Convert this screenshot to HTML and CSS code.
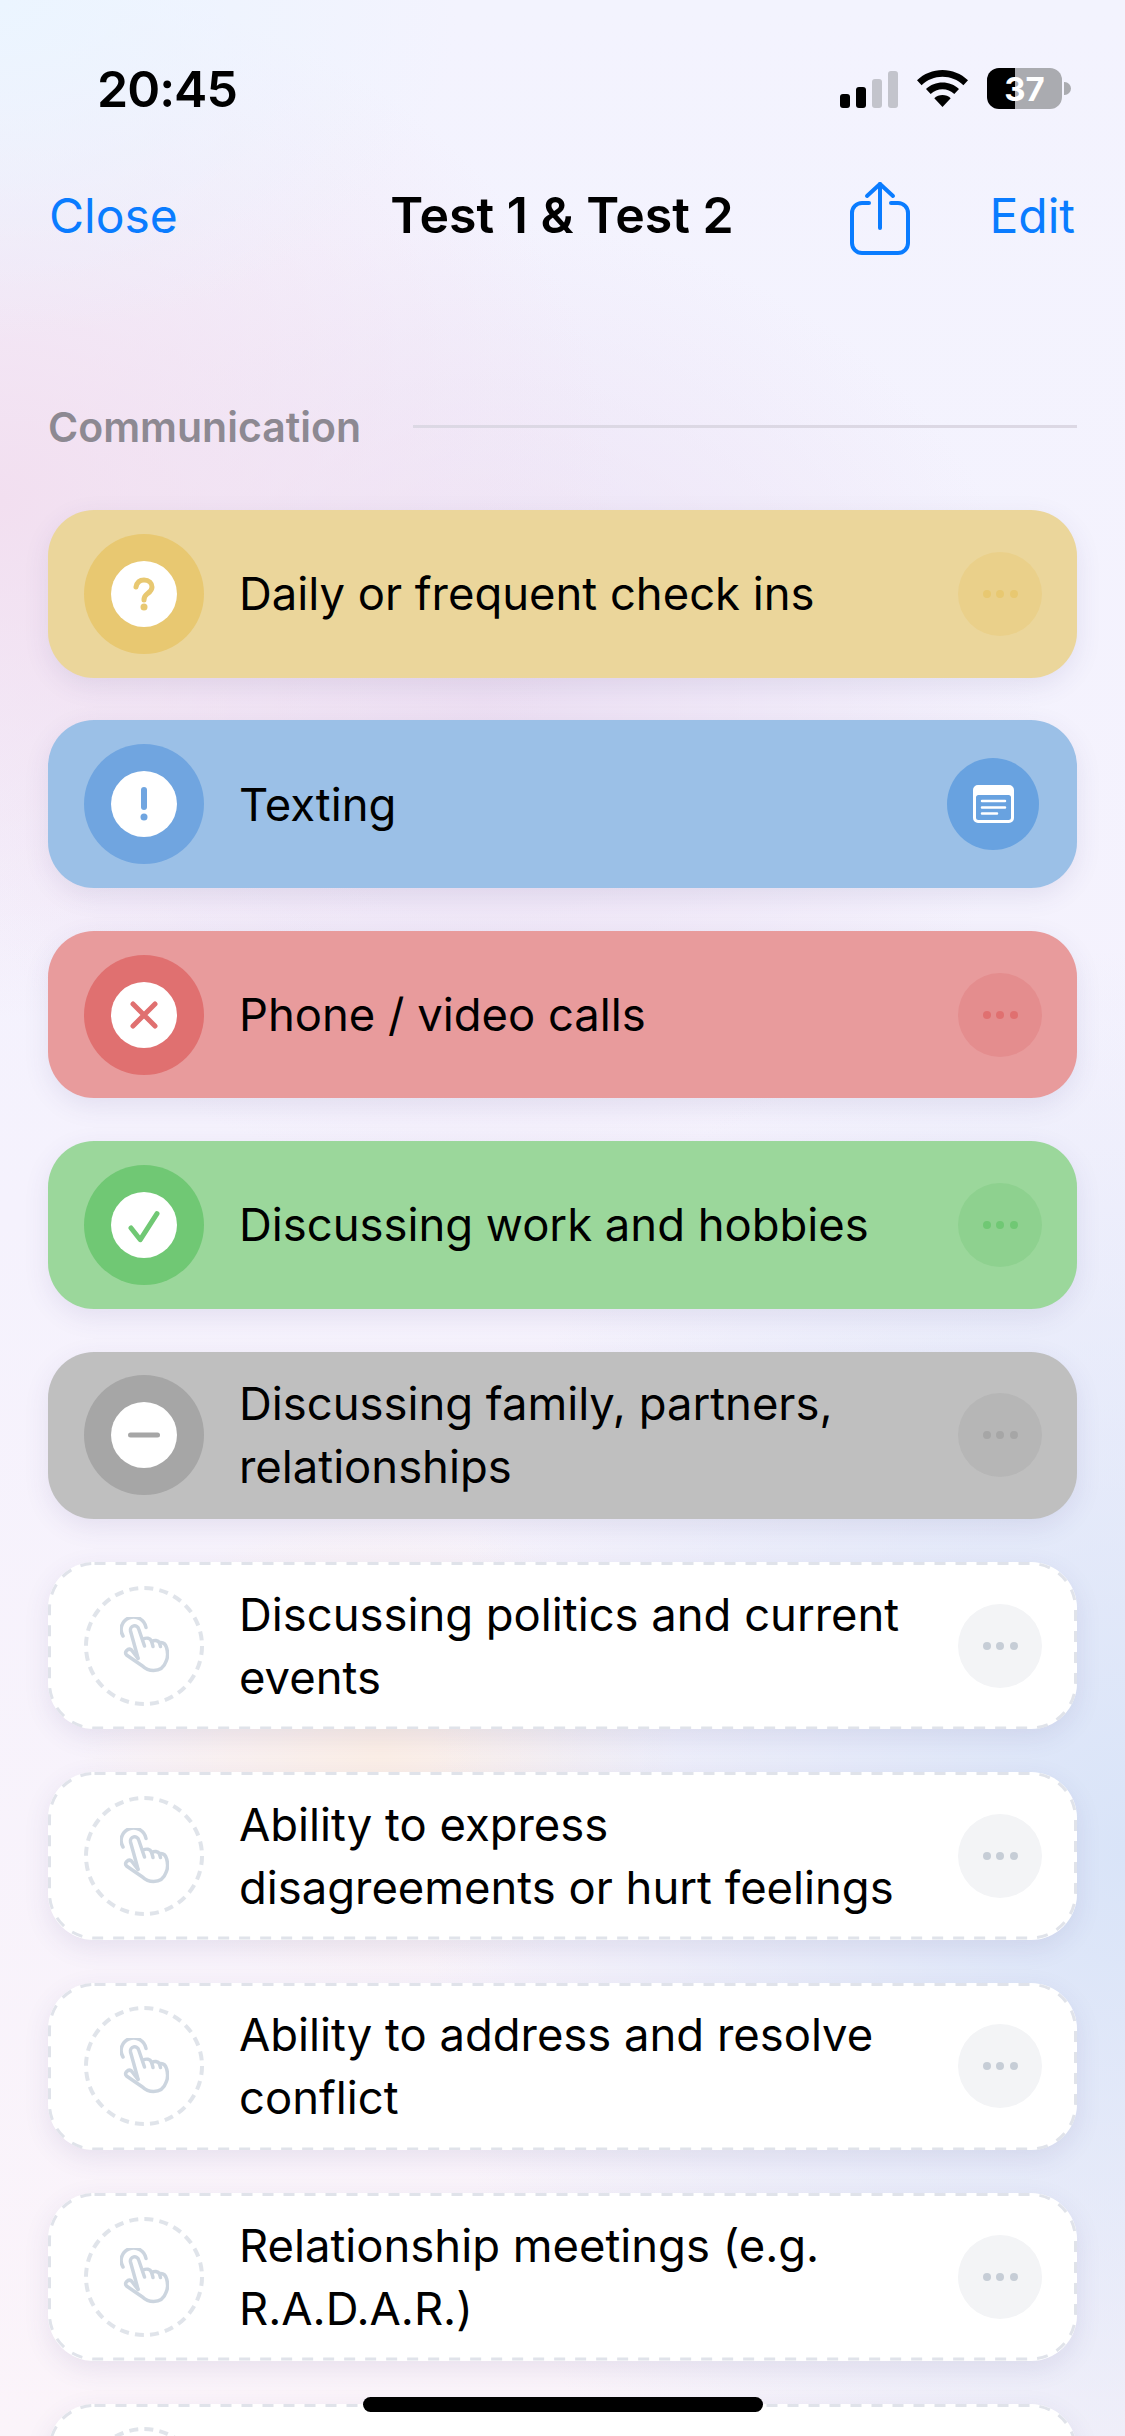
FILE: index.html
```html
<!DOCTYPE html>
<html lang="en">
<head>
    <meta charset="UTF-8">
    <meta name="viewport" content="width=device-width, initial-scale=1.0">
    <title>Test 1 &amp; Test 2</title>
    <link rel="stylesheet" href="styles.css">
</head>
<body>
    <svg class="defs" width="0" height="0">
        <symbol id="hand" viewBox="0 0 49 57">
            <g fill="none" stroke="currentColor" stroke-width="3.500" stroke-linecap="round" stroke-linejoin="round">
                <path d="M3 19A12.500 12.500 0 1 1 26 10.500"/>
                <path d="M18 41 10.500 14a4.200 4.200 0 0 1 8.200-2L24.500 29"/>
                <path d="M23 22c3.500-1.500 7-1 8.500 2l1.500 5.500"/>
                <path d="M31.500 24.500c3-1.500 6.500-1.500 8 1.500l1 3.500"/>
                <path d="M39.500 25.500c3.500-.5 6 1.500 7 5 1.500 5 1.500 10-.5 14-2 6-7 9-12.500 9-4.500 0-8-1.500-11-4.500L6.500 38c-2.500-3 1.500-7.500 5-5l6.500 8.500"/>
            </g>
        </symbol>
    </svg>

    <div class="screen">
        <div class="status-bar">
            <span class="time">20:45</span>
            <div class="status-icons">
                <div class="signal">
                    <i class="bar bar-1"></i><i class="bar bar-2"></i><i class="bar bar-3"></i><i class="bar bar-4"></i>
                </div>
                <svg class="wifi" viewBox="0 0 51 37">
                    <path d="M25.500 0C16 0 7 3.700 0 10.200l4.600 5C10.400 9.800 17.700 6.800 25.500 6.800s15.100 3 20.900 8.400l4.600-5C44 3.700 35 0 25.500 0Z"/>
                    <path d="M25.500 12.500c-6.200 0-12 2.300-16.500 6.500l4.700 5c3.200-3 7.400-4.700 11.800-4.700s8.600 1.700 11.800 4.700l4.700-5c-4.500-4.200-10.300-6.500-16.500-6.500Z"/>
                    <path d="M25.500 25c-3.100 0-6 1.100-8.200 3.200l8.200 8.800 8.200-8.800c-2.200-2.100-5.100-3.200-8.200-3.200Z"/>
                </svg>
                <div class="battery"><span class="battery-level">37</span></div>
                <i class="battery-nub"></i>
            </div>
        </div>

        <div class="nav">
            <a class="nav-link">Close</a>
            <div class="nav-title">Test 1 &amp; Test 2</div>
            <div class="nav-right">
                <svg class="share" viewBox="0 0 60 74">
                    <g fill="none" stroke="#0a7cff" stroke-width="4" stroke-linecap="round" stroke-linejoin="round">
                        <path d="M19 22h-7a10 10 0 0 0-10 10v30a10 10 0 0 0 10 10h36a10 10 0 0 0 10-10V32a10 10 0 0 0-10-10h-7"/>
                        <path d="M30 47V3"/>
                        <path d="M17 15 30 3l13 12"/>
                    </g>
                </svg>
                <a class="nav-link">Edit</a>
            </div>
        </div>

        <div class="section-head">
            <span class="section-name">Communication</span>
            <i class="section-line"></i>
        </div>

        <div class="cards">
            <div class="card card-yellow">
                <div class="status"><div class="status-inner">
                    <svg viewBox="0 0 36 36"><path d="M10 11c1-5 4-7 8-7 5 0 8 3 8 7 0 4-3 5.500-5 7-2 1.500-3 3-3 6" fill="none" stroke="currentColor" stroke-width="5" stroke-linecap="round"/><circle cx="18" cy="31" r="3.500" fill="currentColor"/></svg>
                </div></div>
                <div class="card-text">Daily or frequent check ins</div>
                <div class="more"><i></i><i></i><i></i></div>
            </div>

            <div class="card card-blue">
                <div class="status"><div class="status-inner">
                    <svg viewBox="0 0 36 36"><path d="M18 4v17" fill="none" stroke="currentColor" stroke-width="6" stroke-linecap="round"/><circle cx="18" cy="31" r="3.500" fill="currentColor"/></svg>
                </div></div>
                <div class="card-text">Texting</div>
                <div class="note">
                    <svg viewBox="0 0 41 38">
                        <path fill="#fff" fill-rule="evenodd" d="M5 0h31a5 5 0 0 1 5 5v28a5 5 0 0 1-5 5H5a5 5 0 0 1-5-5V5a5 5 0 0 1 5-5Zm.500 10A2.500 2.500 0 0 0 3 12.500v20A2.500 2.500 0 0 0 5.500 35h30a2.500 2.500 0 0 0 2.500-2.500v-20a2.500 2.500 0 0 0-2.500-2.500Z"/>
                        <path d="M9 16h23M9 22.500h23M9 28.500h15" fill="none" stroke="#fff" stroke-width="2.500" stroke-linecap="round"/>
                    </svg>
                </div>
            </div>

            <div class="card card-red">
                <div class="status"><div class="status-inner">
                    <svg viewBox="0 0 36 36"><path d="M7 7l22 22M29 7 7 29" fill="none" stroke="currentColor" stroke-width="5" stroke-linecap="round"/></svg>
                </div></div>
                <div class="card-text">Phone / video calls</div>
                <div class="more"><i></i><i></i><i></i></div>
            </div>

            <div class="card card-green">
                <div class="status"><div class="status-inner">
                    <svg viewBox="0 0 36 36"><path d="M5 21l9.300 11.700L31 6.700" fill="none" stroke="currentColor" stroke-width="5" stroke-linecap="round" stroke-linejoin="round"/></svg>
                </div></div>
                <div class="card-text">Discussing work and hobbies</div>
                <div class="more"><i></i><i></i><i></i></div>
            </div>

            <div class="card card-grey">
                <div class="status"><div class="status-inner">
                    <svg viewBox="0 0 36 36"><path d="M4.500 18h27" fill="none" stroke="currentColor" stroke-width="5" stroke-linecap="round"/></svg>
                </div></div>
                <div class="card-text">Discussing family, partners,<br>relationships</div>
                <div class="more"><i></i><i></i><i></i></div>
            </div>

            <div class="card card-empty">
                <svg class="dash-border"><rect class="dash-rect"/></svg>
                <div class="status">
                    <svg class="dash-ring" viewBox="0 0 120 120"><circle cx="60" cy="60" r="58"/></svg>
                    <svg class="hand"><use href="#hand"/></svg>
                </div>
                <div class="card-text">Discussing politics and current<br>events</div>
                <div class="more"><i></i><i></i><i></i></div>
            </div>

            <div class="card card-empty">
                <svg class="dash-border"><rect class="dash-rect"/></svg>
                <div class="status">
                    <svg class="dash-ring" viewBox="0 0 120 120"><circle cx="60" cy="60" r="58"/></svg>
                    <svg class="hand"><use href="#hand"/></svg>
                </div>
                <div class="card-text">Ability to express<br>disagreements or hurt feelings</div>
                <div class="more"><i></i><i></i><i></i></div>
            </div>

            <div class="card card-empty">
                <svg class="dash-border"><rect class="dash-rect"/></svg>
                <div class="status">
                    <svg class="dash-ring" viewBox="0 0 120 120"><circle cx="60" cy="60" r="58"/></svg>
                    <svg class="hand"><use href="#hand"/></svg>
                </div>
                <div class="card-text">Ability to address and resolve<br>conflict</div>
                <div class="more"><i></i><i></i><i></i></div>
            </div>

            <div class="card card-empty">
                <svg class="dash-border"><rect class="dash-rect"/></svg>
                <div class="status">
                    <svg class="dash-ring" viewBox="0 0 120 120"><circle cx="60" cy="60" r="58"/></svg>
                    <svg class="hand"><use href="#hand"/></svg>
                </div>
                <div class="card-text">Relationship meetings (e.g.<br>R.A.D.A.R.)</div>
                <div class="more"><i></i><i></i><i></i></div>
            </div>

            <div class="card card-empty">
                <svg class="dash-border"><rect class="dash-rect"/></svg>
                <div class="status">
                    <svg class="dash-ring" viewBox="0 0 120 120"><circle cx="60" cy="60" r="58"/></svg>
                </div>
            </div>
        </div>

        <div class="home-indicator"></div>
    </div>
</body>
</html>
```

FILE: styles.css
```css
* {
    box-sizing: border-box;
}
body {
    margin: 0;
    font-family: Inter, "Noto Sans", sans-serif;
    color: #000;
}
.defs {
    position: absolute;
}
.screen {
    position: relative;
    width: 1125px;
    height: 2436px;
    overflow: hidden;
    padding: 0 48px 0 48px;
    background:
        radial-gradient(ellipse 460px 340px at 0 0, #ebf5ff 0%, rgba(235, 245, 255, 0) 100%),
        radial-gradient(ellipse 620px 520px at 0 500px, #f2dff0 0%, rgba(242, 223, 240, 0) 100%),
        radial-gradient(ellipse 560px 480px at 480px 700px, #ecdff3 0%, rgba(236, 223, 243, 0) 100%),
        radial-gradient(ellipse 700px 900px at 1125px 1850px, #d9e4f8 0%, rgba(217, 228, 248, 0) 100%),
        radial-gradient(ellipse 300px 240px at 380px 1750px, #fbeee6 0%, rgba(251, 238, 230, 0) 100%),
        linear-gradient(180deg, #f3f3fe 0%, #f5f2fd 50%, #fbf4fa 100%);
}

/* status bar */
.status-bar {
    display: flex;
    justify-content: space-between;
    align-items: center;
    height: 46px;
    margin-top: 66px;
    padding-left: 49px;
}
.time {
    font-size: 50px;
    font-weight: 600;
    letter-spacing: -1px;
}
.status-icons {
    display: flex;
    align-items: center;
    margin-right: 6px;
    margin-top: -1px;
}
.signal {
    display: flex;
    align-items: flex-end;
    gap: 6px;
    height: 37px;
    margin-right: 19px;
    margin-top: 1px;
}
.bar {
    display: block;
    width: 10px;
    border-radius: 3px;
    background: #000;
}
.bar-1 { height: 14px; }
.bar-2 { height: 21px; }
.bar-3 { height: 29px; background: #c3c4cc; }
.bar-4 { height: 37px; background: #c3c4cc; }
.wifi {
    width: 51px;
    height: 37px;
    margin-right: 19px;
}
.battery {
    display: flex;
    align-items: center;
    justify-content: center;
    width: 75px;
    height: 41px;
    border-radius: 12px;
    background: linear-gradient(90deg, #000 37%, #aaabb0 37%);
}
.battery-level {
    color: #fff;
    font-size: 33px;
    font-weight: 700;
}
.battery-nub {
    display: block;
    width: 7px;
    height: 13px;
    margin-left: 2px;
    border-radius: 0 7px 7px 0;
    background: #aaabb0;
}

/* nav */
.nav {
    display: grid;
    grid-template-columns: 1fr auto 1fr;
    align-items: center;
    height: 80px;
    margin-top: 63px;
    padding: 0 2px 0 1px;
}
.nav-link {
    color: #0a7cff;
    font-size: 48px;
}
.nav-title {
    font-size: 50px;
    font-weight: 600;
}
.nav-right {
    display: flex;
    justify-content: flex-end;
    align-items: center;
    gap: 79px;
}
.share {
    width: 60px;
    height: 74px;
    margin-top: 6px;
}

/* section heading */
.section-head {
    display: flex;
    align-items: center;
    gap: 52px;
    height: 46px;
    margin-top: 149px;
}
.section-name {
    color: #8d8992;
    font-size: 41px;
    font-weight: 600;
}
.section-line {
    flex: 1;
    height: 3px;
    margin-top: -2px;
    background: #dcd8e4;
}

/* cards */
.cards {
    display: flex;
    flex-direction: column;
    gap: 42.900px;
    margin-top: 60px;
}
.card {
    position: relative;
    flex: none;
    display: flex;
    align-items: center;
    height: 167.500px;
    padding: 0 35px 0 36px;
    border-radius: 46px;
    box-shadow: 0 8px 26px rgba(70, 60, 130, 0.1);
}
.status {
    position: relative;
    flex: none;
    display: flex;
    align-items: center;
    justify-content: center;
    width: 120px;
    height: 120px;
    border-radius: 50%;
}
.status-inner {
    display: flex;
    align-items: center;
    justify-content: center;
    width: 66px;
    height: 66px;
    border-radius: 50%;
    background: #fff;
}
.status-inner svg {
    width: 36px;
    height: 36px;
}
.card-text {
    flex: 1;
    margin-left: 35px;
    font-size: 45.400px;
    font-weight: 430;
    line-height: 63px;
    white-space: nowrap;
}
.more {
    flex: none;
    display: flex;
    align-items: center;
    justify-content: center;
    gap: 5.500px;
    width: 84px;
    height: 84px;
    border-radius: 50%;
}
.more i {
    display: block;
    width: 8px;
    height: 8px;
    border-radius: 50%;
}
.note {
    flex: none;
    display: flex;
    align-items: center;
    justify-content: center;
    width: 92px;
    height: 92px;
    margin-right: 3px;
    border-radius: 50%;
    background: #68a2e0;
}
.note svg {
    width: 41px;
    height: 38px;
}

.card-yellow { background: #ebd69b; }
.card-yellow .status { background: #e8c871; }
.card-yellow .status-inner { color: #e8c871; }
.card-yellow .more { background: #ead08a; }
.card-yellow .more i { background: #e8c871; }

.card-blue { background: #9bc0e7; }
.card-blue .status { background: #70a5e0; }
.card-blue .status-inner { color: #70a5e0; }

.card-red { background: #e89b9c; }
.card-red .status { background: #e07070; }
.card-red .status-inner { color: #e07070; }
.card-red .more { background: #e48d8e; }
.card-red .more i { background: #e07070; }

.card-green { background: #9bd79b; }
.card-green .status { background: #70c874; }
.card-green .status-inner { color: #70c874; }
.card-green .more { background: #8ed18f; }
.card-green .more i { background: #70c874; }

.card-grey { background: #bfbfbf; }
.card-grey .status { background: #a6a6a6; }
.card-grey .status-inner { color: #a6a6a6; }
.card-grey .more { background: #b6b6b6; }
.card-grey .more i { background: #a6a6a6; }

.card-empty { background: #fff; }
.card-empty .more { background: #f3f4f6; }
.card-empty .more i { background: #c6cdd6; }

.dash-border {
    position: absolute;
    inset: 0;
    width: 100%;
    height: 100%;
    pointer-events: none;
}
.dash-rect {
    x: 1.500px;
    y: 1.500px;
    width: calc(100% - 3px);
    height: calc(100% - 3px);
    rx: 45px;
    fill: none;
    stroke: #e0e3ea;
    stroke-width: 3px;
    stroke-dasharray: 11 10;
}
.dash-ring {
    position: absolute;
    inset: 0;
    width: 120px;
    height: 120px;
}
.dash-ring circle {
    fill: none;
    stroke: #e0e4ea;
    stroke-width: 4px;
    stroke-dasharray: 9 6.180;
}
.hand {
    width: 49px;
    height: 57px;
    color: #ccd5df;
}

.home-indicator {
    position: absolute;
    left: 363px;
    top: 2397px;
    width: 400px;
    height: 15px;
    border-radius: 8px;
    background: #000;
}
```
